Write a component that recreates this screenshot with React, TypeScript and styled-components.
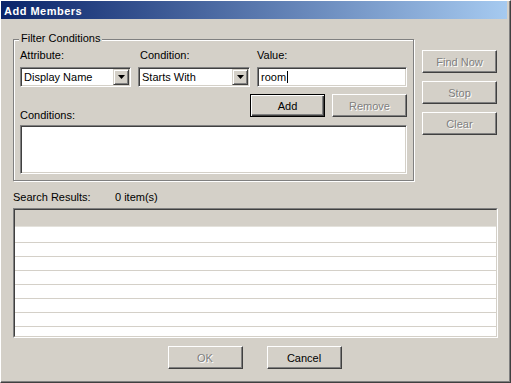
import styled, { createGlobalStyle } from 'styled-components'

const GlobalStyle = createGlobalStyle`
  html, body {
    margin: 0;
    padding: 0;
    background: #d4d0c8;
  }
  body {
    font-family: "Liberation Sans", Arial, sans-serif;
    font-size: 11px;
    color: #000;
  }
`

const Window = styled.div`
  width: 511px;
  height: 383px;
  box-sizing: border-box;
  background: #d4d0c8;
  border-top: 1px solid #fff;
  border-left: 1px solid #fff;
  border-right: 1px solid #404040;
  border-bottom: 1px solid #404040;
  box-shadow: inset -1px -1px #808080;
  overflow: hidden;
`

const TitleBar = styled.div`
  height: 18px;
  margin-right: 3px;
  box-sizing: border-box;
  padding: 2px 0 0 3px;
  line-height: 16px;
  background: linear-gradient(to right, #0a246a, #a6caf0);
  color: #fff;
  font-weight: bold;
  font-size: 11px;
  letter-spacing: 0.5px;
  white-space: nowrap;
`

const Body = styled.div`
  padding: 20px 12px 0 12px;
`

const TopRow = styled.div`
  display: flex;
  align-items: flex-start;
  gap: 8px;
`

const Group = styled.div`
  position: relative;
  width: 401px;
  box-sizing: border-box;
  border: 1px solid #808080;
  box-shadow: inset 1px 1px #fff, 1px 1px #fff;
  padding: 9px 6px 6px 6px;
`

const GroupTitle = styled.span`
  position: absolute;
  top: -8px;
  left: 5px;
  padding: 0 2px;
  line-height: 13px;
  background: #d4d0c8;
`

const FieldGrid = styled.div`
  display: grid;
  grid-template-columns: 111px 112px 150px;
  column-gap: 7px;
  row-gap: 5px;
`

const Label = styled.div<{ $indent?: number }>`
  line-height: 13px;
  padding-left: ${({ $indent }) => $indent || 0}px;
  white-space: nowrap;
`

const Field = styled.div`
  display: flex;
  align-items: center;
  height: 20px;
  box-sizing: border-box;
  border: 1px solid;
  border-color: #808080 #fff #fff #808080;
  box-shadow: inset 1px 1px #404040, inset -1px -1px #d4d0c8;
  background: #fff;
  padding: 1px 1px 1px 2px;
  line-height: 13px;
  white-space: nowrap;
`

const FieldText = styled.span`
  padding-left: 1px;
`

const Caret = styled.span`
  display: inline-block;
  width: 1px;
  height: 12px;
  background: #000;
  margin-left: 1px;
`

const ArrowButton = styled.div`
  margin-left: auto;
  width: 16px;
  height: 16px;
  box-sizing: border-box;
  background: #d4d0c8;
  border: 1px solid;
  border-color: #d4d0c8 #404040 #404040 #d4d0c8;
  box-shadow: inset 1px 1px #fff, inset -1px -1px #808080;
  display: flex;
  align-items: center;
  justify-content: center;
`

const ActionRow = styled.div`
  display: flex;
  height: 28px;
  margin-top: 7px;
`

const BottomLabel = styled(Label)`
  align-self: flex-end;
`

const ButtonPair = styled.div`
  display: flex;
  gap: 7px;
  margin-left: auto;
  align-self: flex-start;
`

const Button = styled.div<{ $disabled?: boolean; $default?: boolean }>`
  width: 75px;
  height: 23px;
  box-sizing: border-box;
  display: flex;
  align-items: center;
  justify-content: center;
  padding-top: 1px;
  font-size: 11px;
  background: #d4d0c8;
  border: 1px solid;
  border-color: ${({ $default }) => ($default ? '#000' : '#fff #404040 #404040 #fff')};
  box-shadow: ${({ $default }) =>
    $default
      ? 'inset 1px 1px #fff, inset -1px -1px #404040, inset -2px -2px #808080'
      : 'inset -1px -1px #808080'};
  color: ${({ $disabled }) => ($disabled ? '#808080' : '#000')};
  text-shadow: ${({ $disabled }) => ($disabled ? '1px 1px #fff' : 'none')};
  cursor: default;
  user-select: none;
`

const ConditionList = styled.div`
  margin-top: 3px;
  height: 49px;
  box-sizing: border-box;
  border: 1px solid;
  border-color: #808080 #fff #fff #808080;
  box-shadow: inset 1px 1px #404040, inset -1px -1px #d4d0c8;
  background: #fff;
`

const SideButtons = styled.div`
  display: flex;
  flex-direction: column;
  gap: 8px;
  margin-top: 11px;
`

const ResultsHeader = styled.div`
  display: flex;
  margin-top: 10px;
  line-height: 13px;
`

const ResultsLabel = styled.span`
  width: 102px;
`

const ListFrame = styled.div`
  margin-top: 4px;
  width: 485px;
  height: 130px;
  box-sizing: border-box;
  border: 1px solid;
  border-color: #808080 #fff #fff #808080;
`

const ListInner = styled.div`
  height: 100%;
  box-sizing: border-box;
  border: 1px solid;
  border-color: #404040 #d4d0c8 #d4d0c8 #404040;
  background: #fff;
  overflow: hidden;
`

const ColumnHeader = styled.div`
  height: 17px;
  box-sizing: border-box;
  background: #d4d0c8;
  border-bottom: 1px solid #e4e2dc;
`

const Rows = styled.div`
  padding-top: 2px;
`

const Row = styled.div`
  height: 14px;
  box-sizing: border-box;
  border-bottom: 1px solid #d4d0c8;
`

const Footer = styled.div`
  display: flex;
  justify-content: center;
  gap: 24px;
  margin-top: 8px;
  padding-right: 2px;
`

const DropArrow = () => (
  <svg width="7" height="4" viewBox="0 0 7 4">
    <polygon points="0,0 7,0 3.5,4" fill="#000" />
  </svg>
)

const Combo = ({ value }: { value: string }) => (
  <Field>
    <FieldText>{value}</FieldText>
    <ArrowButton>
      <DropArrow />
    </ArrowButton>
  </Field>
)

const App = () => {
  const rows = Array.from({ length: 8 }, (_, i) => i)

  return (
    <Window>
      <GlobalStyle />
      <TitleBar>Add Members</TitleBar>
      <Body>
        <TopRow>
          <Group>
            <GroupTitle>Filter Conditions</GroupTitle>
            <FieldGrid>
              <Label>Attribute:</Label>
              <Label $indent={2}>Condition:</Label>
              <Label>Value:</Label>
              <Combo value="Display Name" />
              <Combo value="Starts With" />
              <Field>
                <FieldText>room</FieldText>
                <Caret />
              </Field>
            </FieldGrid>
            <ActionRow>
              <BottomLabel>Conditions:</BottomLabel>
              <ButtonPair>
                <Button $default>Add</Button>
                <Button $disabled>Remove</Button>
              </ButtonPair>
            </ActionRow>
            <ConditionList />
          </Group>
          <SideButtons>
            <Button $disabled>Find Now</Button>
            <Button $disabled>Stop</Button>
            <Button $disabled>Clear</Button>
          </SideButtons>
        </TopRow>

        <ResultsHeader>
          <ResultsLabel>Search Results:</ResultsLabel>
          <span>0 item(s)</span>
        </ResultsHeader>
        <ListFrame>
          <ListInner>
            <ColumnHeader />
            <Rows>
              {rows.map((i) => (
                <Row key={i} />
              ))}
            </Rows>
          </ListInner>
        </ListFrame>

        <Footer>
          <Button $disabled>OK</Button>
          <Button>Cancel</Button>
        </Footer>
      </Body>
    </Window>
  )
}

export default App
